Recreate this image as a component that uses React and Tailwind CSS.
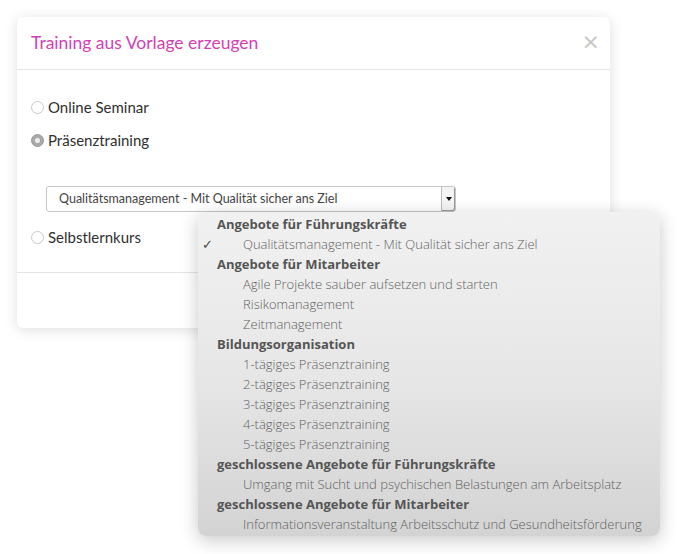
import React from "react";

const groups = [
  { title: "Angebote für Führungskräfte", items: [{ t: "Qualitätsmanagement - Mit Qualität sicher ans Ziel", checked: true }] },
  { title: "Angebote für Mitarbeiter", items: [{ t: "Agile Projekte sauber aufsetzen und starten" }, { t: "Risikomanagement" }, { t: "Zeitmanagement" }] },
  { title: "Bildungsorganisation", items: [{ t: "1-tägiges Präsenztraining" }, { t: "2-tägiges Präsenztraining" }, { t: "3-tägiges Präsenztraining" }, { t: "4-tägiges Präsenztraining" }, { t: "5-tägiges Präsenztraining" }] },
  { title: "geschlossene Angebote für Führungskräfte", items: [{ t: "Umgang mit Sucht und psychischen Belastungen am Arbeitsplatz" }] },
  { title: "geschlossene Angebote für Mitarbeiter", items: [{ t: "Informationsveranstaltung Arbeitsschutz und Gesundheitsförderung" }] },
];

function Radio({ checked, label }) {
  return (
    <div className="flex items-center h-[20px]">
      {checked ? (
        <span className="w-[13px] h-[13px] rounded-full bg-[#a9a9a9] border border-[#9a9a9a] flex items-center justify-center shrink-0">
          <span className="w-[5px] h-[5px] rounded-full bg-[#eeeeee]" />
        </span>
      ) : (
        <span className="w-[13px] h-[13px] rounded-full bg-white border border-[#c9c9c9] shrink-0" />
      )}
      <span className="ml-[4px] text-[15px] text-[#2f2f2f] leading-none">{label}</span>
    </div>
  );
}

export default function App() {
  return (
    <div className="relative w-[677px] h-[554px] bg-white overflow-hidden" style={{ fontFamily: "Lato, 'Noto Sans', sans-serif" }}>
      <div className="absolute left-[17px] top-[17px] w-[593px] h-[311px] bg-white rounded-[6px] shadow-[0_2px_14px_rgba(0,0,0,0.13)] flex flex-col">
        <div className="h-[53px] border-b border-[#e5e5e5] flex items-center justify-between pl-[14px] pr-[10px] shrink-0">
          <span className="text-[17.5px] text-[#d23fb6] leading-none">Training aus Vorlage erzeugen</span>
          <span className="text-[#c6c6c6] text-[22px] leading-none mb-[2px]" style={{ fontFamily: "'DejaVu Sans', sans-serif" }}>×</span>
        </div>
        <div className="h-[203px] border-b border-[#e5e5e5] pl-[14px] pt-[27px] shrink-0">
          <Radio label="Online Seminar" />
          <div className="mt-[13px]"><Radio checked label="Präsenztraining" /></div>
          <div className="mt-[36px] ml-[15px] w-[410px] h-[26px] border border-[#c6c6c6] rounded-[3px] bg-white flex items-center justify-between">
            <span className="ml-[12px] text-[12.5px] text-[#444]">Qualitätsmanagement - Mit Qualität sicher ans Ziel</span>
            <span className="w-[14px] h-[24px] border-l border-[#bbb] bg-[#f4f4f4] rounded-r-[2px] flex items-center justify-center shadow-[inset_-1px_-1px_0_#999]">
              <span className="w-0 h-0 border-l-[3px] border-r-[3px] border-t-[4px] border-l-transparent border-r-transparent border-t-[#111]" />
            </span>
          </div>
          <div className="mt-[15px]"><Radio label="Selbstlernkurs" /></div>
        </div>
      </div>

      <div
        className="absolute left-[198px] top-[212px] w-[462px] h-[324px] rounded-[8px] shadow-[0_4px_18px_rgba(0,0,0,0.22)] pt-[3px] bg-linear-to-b from-[#f1f1f1] via-[#e7e7e7] to-[#d3d3d3]"
        style={{ fontFamily: "'Open Sans', sans-serif" }}
      >
        {groups.map((g) => (
          <div key={g.title}>
            <div className="h-[20px] flex items-center pl-[19px] text-[13px] font-bold text-[#555]">{g.title}</div>
            {g.items.map((it) => (
              <div key={it.t} className="relative h-[20px] flex items-center pl-[45px] text-[13px] text-[#626262] font-light">
                {it.checked && <span className="absolute left-[4px] text-[13px] text-[#444]" style={{ fontFamily: "'DejaVu Sans', sans-serif" }}>✓</span>}
                {it.t}
              </div>
            ))}
          </div>
        ))}
      </div>
    </div>
  );
}
